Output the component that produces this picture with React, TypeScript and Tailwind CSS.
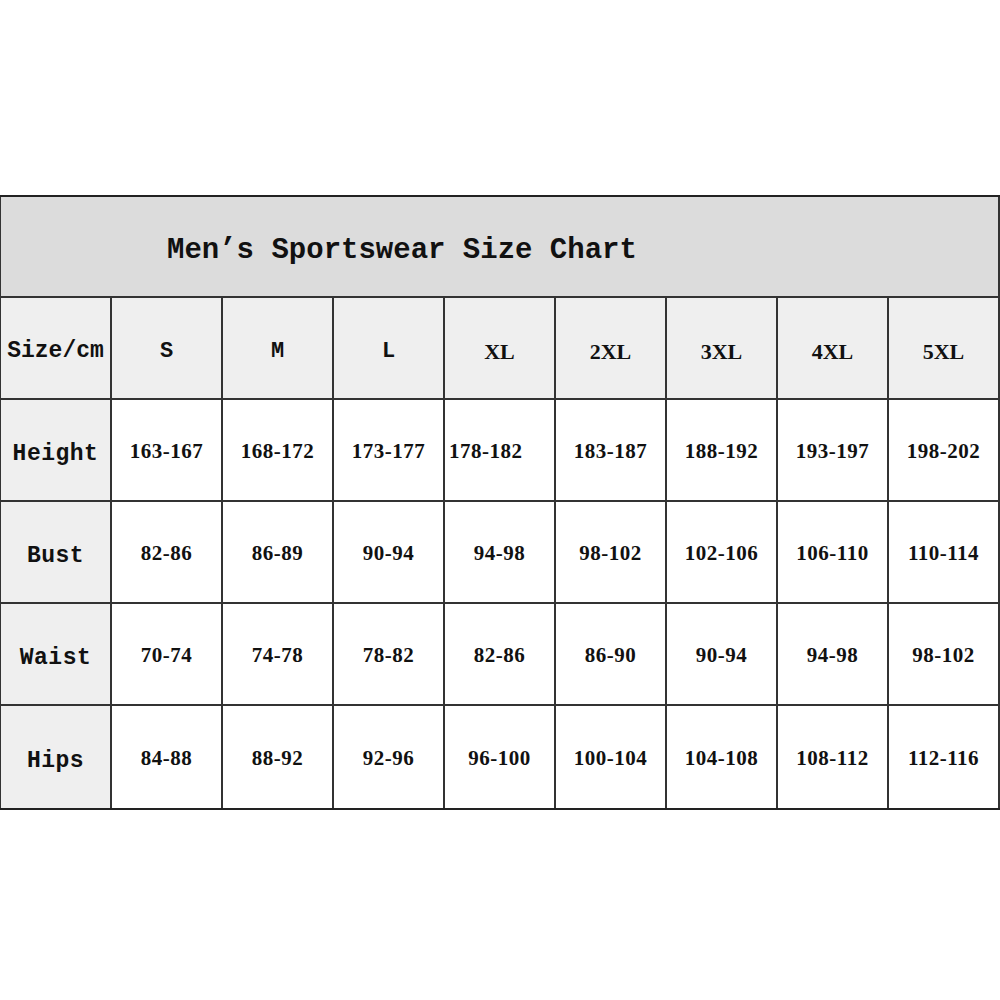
const sizes = ["S", "M", "L", "XL", "2XL", "3XL", "4XL", "5XL"];

const rows = [
  { label: "Height", values: ["163-167", "168-172", "173-177", "178-182", "183-187", "188-192", "193-197", "198-202"] },
  { label: "Bust", values: ["82-86", "86-89", "90-94", "94-98", "98-102", "102-106", "106-110", "110-114"] },
  { label: "Waist", values: ["70-74", "74-78", "78-82", "82-86", "86-90", "90-94", "94-98", "98-102"] },
  { label: "Hips", values: ["84-88", "88-92", "92-96", "96-100", "100-104", "104-108", "108-112", "112-116"] },
];

const mono = "font-['Liberation_Mono',monospace]";
const serif = "font-['Liberation_Serif',serif]";

export default function App() {
  return (
    <div className="w-[1000px] h-[1000px] bg-white pt-[195px] text-[#111]">
      <div className="w-[1000px] border-t-2 border-b-2 border-[#222]">
        <div className="h-[101px] bg-[#dcdcdc] border-l border-r-2 border-b-2 border-[#333] flex items-center pl-[166px] pt-[8px]">
          <span className={`${mono} font-bold text-[29px] leading-none`}>Men’s Sportswear Size Chart</span>
        </div>

        <div className="grid grid-cols-[112px_repeat(8,111px)]">
          <div className="h-[102px] bg-[#efefef] border-l border-r-2 border-b-2 border-[#333] flex items-center justify-center pt-[6px]">
            <span className={`${mono} font-bold text-[23px]`}>Size/cm</span>
          </div>
          {sizes.map((s, i) => (
            <div key={s} className="h-[102px] bg-[#efefef] border-r-2 border-b-2 border-[#333] flex items-center justify-center pt-[6px]">
              <span className={`${i < 3 ? mono + " text-[22px]" : serif + " text-[22px]"} font-bold`}>{s}</span>
            </div>
          ))}

          {rows.map((r, ri) => (
            <div key={r.label} className="contents">
              <div className={`h-[102px] bg-[#efefef] border-l border-r-2 border-[#333] flex items-center justify-center pt-[8px] ${ri < rows.length - 1 ? "border-b-2" : ""}`}>
                <span className={`${mono} font-bold text-[23px] tracking-[0.5px]`}>{r.label}</span>
              </div>
              {r.values.map((v, vi) => (
                <div
                  key={vi}
                  className={`h-[102px] bg-white border-r-2 border-[#333] flex items-center pt-[3px] ${ri < rows.length - 1 ? "border-b-2" : ""} ${ri === 0 && vi === 3 ? "justify-start pl-[4px]" : "justify-center"}`}
                >
                  <span className={`${serif} font-bold text-[21px] tracking-[0.5px]`}>{v}</span>
                </div>
              ))}
            </div>
          ))}
        </div>
      </div>
    </div>
  );
}
